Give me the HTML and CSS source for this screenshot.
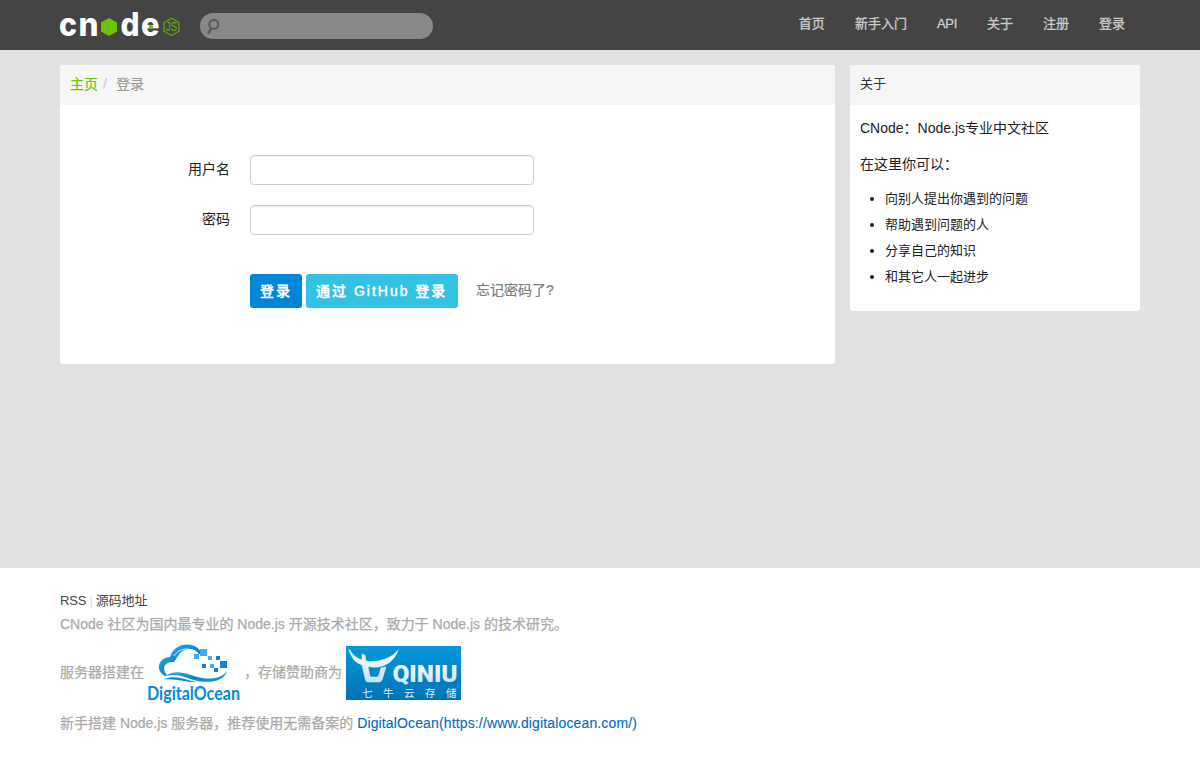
FILE: index.html
```html
<!DOCTYPE html>
<html lang="zh-CN">
<head>
<meta charset="utf-8">
<title>CNode：Node.js专业中文社区</title>
<link rel="stylesheet" href="styles.css">
</head>
<body>
<header class="navbar">
  <div class="container navbar-inner">
    <a class="brand" aria-label="cnode">
      <svg width="120" height="30" viewBox="0 0 120 30">
        <g class="brand-letters">
          <text x="-1" y="26.500" textLength="18" lengthAdjust="spacingAndGlyphs">c</text>
          <text x="18.500" y="26.500" textLength="20" lengthAdjust="spacingAndGlyphs">n</text>
          <text x="60.500" y="26.500" textLength="19" lengthAdjust="spacingAndGlyphs">d</text>
          <text x="81" y="26.500" textLength="18.500" lengthAdjust="spacingAndGlyphs">e</text>
        </g>
        <path d="M49 9l8 4.500v9L49 27l-8-4.500v-9z" fill="#6bc500"/>
        <path d="M91 15.700l2 1v2.200l-2 1-2-1v-2.200z" fill="#6bc500"/>
        <path d="M111.500 9.300l7.500 4.300v8.600l-7.500 4.300-7.500-4.300v-8.600z" fill="none" stroke="#5fa716" stroke-width="1.300"/>
        <text x="106" y="22" class="brand-js" textLength="11" lengthAdjust="spacingAndGlyphs">JS</text>
      </svg>
    </a>
    <form class="search">
      <svg width="16" height="18" viewBox="0 0 16 18"><circle cx="8.800" cy="6.400" r="4.500" fill="none" stroke="#5b5b5b" stroke-width="2.100"/><path d="M6.200 10.700L3.600 14.800" stroke="#5b5b5b" stroke-width="2.700" stroke-linecap="round"/></svg>
      <input class="search-input" type="text" aria-label="search">
    </form>
    <nav class="nav"><a>首页</a><a>新手入门</a><a class="latin">API</a><a>关于</a><a>注册</a><a>登录</a></nav>
  </div>
</header>
<main class="container main">
  <section class="panel content">
    <div class="panel-header breadcrumb"><a class="home">主页</a><span class="divider">/</span><span class="current">登录</span></div>
    <form class="login">
      <div class="row"><label for="name">用户名</label><input id="name" class="field" type="text"></div>
      <div class="row"><label for="pass">密码</label><input id="pass" class="field" type="password"></div>
      <div class="actions"><a class="button primary">登录</a><a class="button info">通过 GitHub 登录</a><a class="forgot">忘记密码了?</a></div>
    </form>
  </section>
  <aside class="panel sidebar">
    <div class="panel-header about">关于</div>
    <div class="about-body">
      <p>CNode：Node.js专业中文社区</p>
      <p>在这里你可以：</p>
      <ul><li>向别人提出你遇到的问题</li><li>帮助遇到问题的人</li><li>分享自己的知识</li><li>和其它人一起进步</li></ul>
    </div>
  </aside>
</main>
<footer class="footer">
  <div class="container">
    <div class="links"><a>RSS</a><span class="bar">|</span><a>源码地址</a></div>
    <div class="line intro">CNode 社区为国内最专业的 Node.js 开源技术社区，致力于 Node.js 的技术研究。</div>
    <div class="sponsors">
      <span>服务器搭建在</span>
      <svg class="ocean" width="94" height="60" viewBox="0 0 94 60">
        <defs><linearGradient id="sea" x1="0" y1="0" x2="1" y2="1"><stop offset="0" stop-color="#3aaee8"/><stop offset=".55" stop-color="#0787cf"/><stop offset="1" stop-color="#1997dc"/></linearGradient></defs>
        <path d="M18 33C8 27 11 15 23 14 26 3 40-2 50 4.500L57 11.500 52 11C47 4 36 4 31 13L27 19C18 18 14 25 20 32z" fill="url(#sea)"/>
        <path d="M27 13C31 6 40 4 47 8" fill="none" stroke="#fff" stroke-width=".8"/>
        <path d="M17 34C29 24 42 32 55 35 67 37 76 34 80 28 77 37 67 40 54 38.500 41 37 30 28 17 34z" fill="url(#sea)"/>
        <path d="M16 36.500C29 31 38 37 50 39 40 40 31 35 16 36.500z" fill="#1489cf"/>
        <g fill="#43abe8"><path d="M47 11h5v5h-5zM53 6h7v7h-7zM61 13h4v4h-4zM63 21h4v4h-4z"/></g>
        <g fill="#0a87d4"><path d="M69 13h4v4h-4zM55 21h4v4h-4zM73 18h7v7h-7zM67 25h4v4h-4z"/></g>
        <text x="0" y="56.500" textLength="93" lengthAdjust="spacingAndGlyphs" class="ocean-text">DigitalOcean</text>
      </svg>
      <span class="storage">，存储赞助商为</span>
      <svg class="qiniu" width="115" height="54" viewBox="0 0 115 54">
        <defs><linearGradient id="blue" x1="0" y1="0" x2="0" y2="1"><stop offset="0" stop-color="#0698d9"/><stop offset="1" stop-color="#0073b5"/></linearGradient><linearGradient id="silver" x1="0" y1="0" x2="0" y2="1"><stop offset="0" stop-color="#fff"/><stop offset="1" stop-color="#c5e0f2"/></linearGradient></defs>
        <path d="M0 0h115v54H0z" fill="url(#blue)"/>
        <path d="M3 3C5 12 10 17 16 19L19.500 34Q20 36 22 36H33Q35 36 36 34L40 21 35 22 32.500 30Q32 31 31 31H25Q24 31 24 30L22 20.500C37 24 49 15 52 4 45 13 31 17 20 15L19 9 16 8 16 14C10 12 6 8 3 3z" fill="url(#silver)" stroke="#f2f9fd" stroke-width=".5"/>
        <text x="46.500" y="35.500" textLength="65" lengthAdjust="spacingAndGlyphs" class="qiniu-name" fill="url(#silver)">QINIU</text>
        <g class="qiniu-cn"><text x="16" y="51">七</text><text x="37" y="51">牛</text><text x="58" y="51">云</text><text x="79" y="51">存</text><text x="100" y="51">储</text></g>
      </svg>
    </div>
    <div class="line">新手搭建 Node.js 服务器，推荐使用无需备案的 <a class="promo">DigitalOcean(https://www.digitalocean.com/)</a></div>
  </div>
</footer>
</body>
</html>
```
FILE: styles.css
```css
* { box-sizing: border-box; }
body { margin: 0; background: #e1e1e1; color: #333; font: 14px/20px "Liberation Sans", "Noto Sans CJK SC", sans-serif; }
.container { width: 1080px; margin: 0 auto; }
.navbar { height: 50px; background: #444; }
.navbar-inner { display: flex; align-items: flex-start; }
.brand { display: block; width: 120px; height: 30px; margin-top: 9px; }
.brand svg { display: block; overflow: visible; }
.brand-letters { font: 800 32px Inter, sans-serif; fill: #fff; }
.brand-js { font: 12px "Liberation Sans", sans-serif; fill: #5fa716; stroke: #5fa716; stroke-width: .3px; }
.search { display: flex; width: 233px; height: 26px; margin: 13px 0 0 20px; padding: 5px 8px 0 5px; border-radius: 13px; background: #888; }
.search-input { flex: 1; height: 18px; border: 0; background: transparent; outline: 0; }
.nav { display: flex; margin-left: auto; padding-top: 14px; font-size: 13px; color: #ccc; -webkit-text-stroke: .3px #ccc; }
.nav a { padding: 0 15px; }
.nav .latin { letter-spacing: -.3px; }
.main { display: flex; align-items: flex-start; justify-content: space-between; height: 518px; padding-top: 15px; }
.panel { border-radius: 3px; background: #fff; overflow: hidden; }
.panel-header { height: 40px; padding: 10px; background: #f6f6f6; }
.content { width: 775px; height: 299px; }
.breadcrumb { display: flex; padding-top: 9px; color: #999; -webkit-text-stroke: .2px; }
.home { color: #6bc500; }
.divider { padding: 0 9px 0 5px; color: #ccc; }
.login { padding-top: 50px; }
.row { display: flex; height: 30px; margin-bottom: 20px; }
.row label { width: 170px; margin-right: 20px; padding-top: 4px; text-align: right; color: #222; }
.field { width: 284px; height: 30px; padding: 4px 6px; border: 1px solid #ccc; border-radius: 4px; background: #fff; box-shadow: inset 0 1px 1px rgba(0,0,0,.075); }
.actions { display: flex; gap: 4px; padding: 19px 0 0 190px; }
.button { height: 34px; padding: 7px 10px; border-radius: 3px; color: #fff; font-weight: 500; letter-spacing: 2px; white-space: nowrap; -webkit-text-stroke: .4px #fff; }
.primary { width: 52px; background: #0085d8; }
.info { width: 152px; background: #33c1e4; }
.forgot { padding: 6px 0 0 14px; color: #778087; -webkit-text-stroke: .2px; }
.sidebar { width: 290px; height: 246px; }
.about { font-size: 13px; padding-top: 9px; }
.about-body { padding: 13px 10px; color: #222; }
.about-body p { margin: 0 0 16px; }
.about-body ul { margin: -4px 0 0; padding: 0 0 0 25px; font-size: 13px; line-height: 26px; }
.footer { height: 195px; padding-top: 23px; background: #fff; color: #aaa; -webkit-text-stroke: .25px; }
.links { display: flex; font-size: 13px; color: #444; letter-spacing: -.1px; -webkit-text-stroke: 0; }
.bar { padding: 0 3px; color: #ddd; }
.line { height: 20px; white-space: nowrap; }
.intro { margin-top: 3px; }
.sponsors { display: flex; height: 60px; margin-top: 9px; align-items: center; white-space: nowrap; }
.sponsors span { margin-top: -3px; }
.ocean { margin: 0 3px; overflow: visible; -webkit-text-stroke: 0; }
.ocean-text { font: bold 18px Lato, sans-serif; fill: #078bd3; }
.qiniu { margin-left: 4px; -webkit-text-stroke: 0; }
.qiniu-name { font: 900 23px Roboto, sans-serif; }
.qiniu-cn { font: 10.500px/11px "Noto Sans CJK SC", sans-serif; fill: #e4f2fb; }
.sponsors + .line { margin-top: 10px; }
.promo { color: #0069c6; letter-spacing: .14px; -webkit-text-stroke: .1px; }
```
